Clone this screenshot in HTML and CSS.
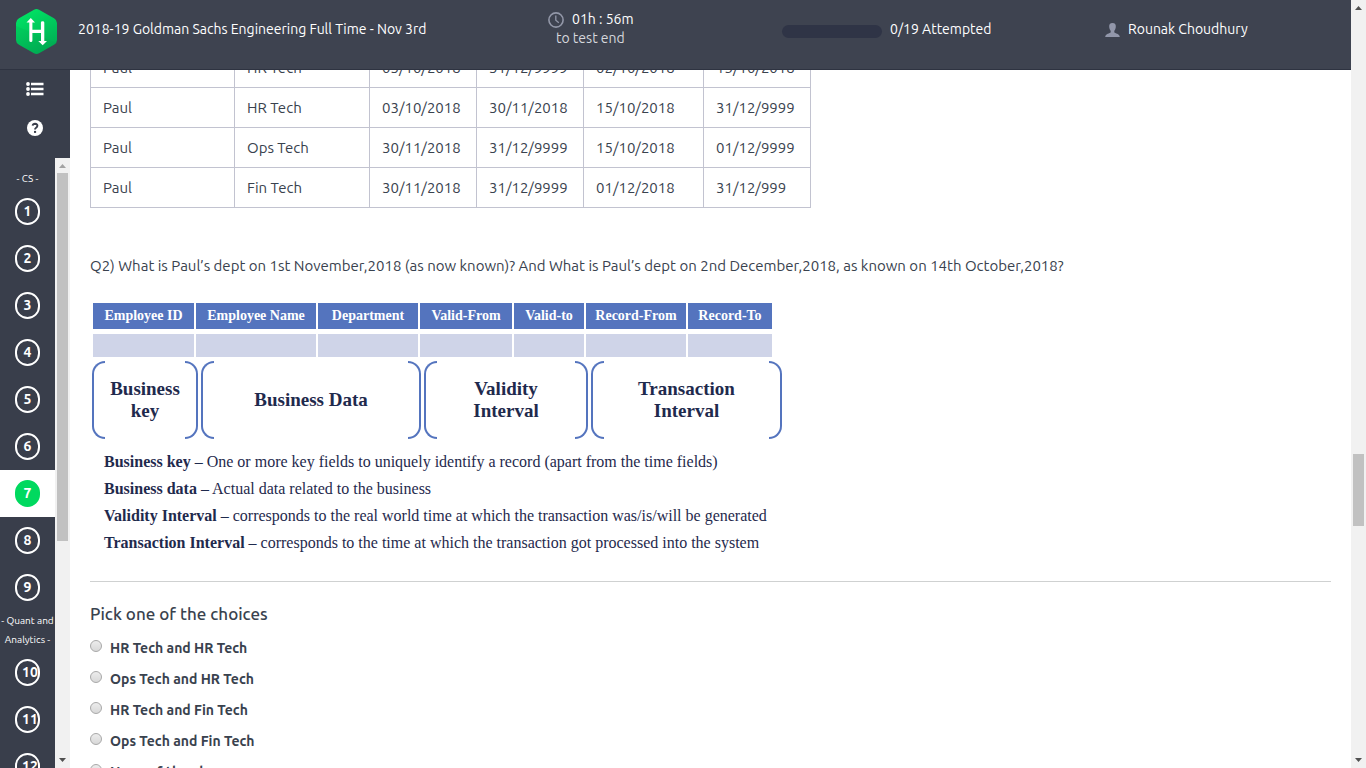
FILE: index.html
```html
<!DOCTYPE html>
<html lang="en">
<head>
<meta charset="utf-8">
<meta name="viewport" content="width=device-width, initial-scale=1">
<title>2018-19 Goldman Sachs Engineering Full Time - Nov 3rd</title>
<link rel="stylesheet" href="styles.css">
</head>
<body>
<div class="app">
  <header class="topbar">
    <a class="logo" href="#" aria-label="Home">
      <svg width="41" height="45" viewBox="0 0 41 45">
        <defs><linearGradient id="lg" x1="0" y1="0" x2="0.5" y2="1"><stop offset="0" stop-color="#00ea66"/><stop offset="1" stop-color="#00b055"/></linearGradient></defs>
        <path d="M18 .8Q20.500-.6 23 .8L38 9.300Q41 11 41 14V31Q41 34 38 35.700L23 44.200Q20.500 45.600 18 44.200L3 35.700Q0 34 0 31V14Q0 11 3 9.300Z" fill="url(#lg)"/>
        <path d="M0 17L41 34Q41 34.500 38 35.700L23 44.200Q20.500 45.600 18 44.200L3 35.700Q0 34 0 31Z" fill="#009a4a" opacity=".15"/>
        <path d="M13.300 12H16.400V20.800H24.900V13.500Q24.900 12.300 26.600 12.300T28.300 13.500V32H31L26.700 36.200L22.300 32H25V24H16.400V31.500Q16.400 33 14.900 33T13.300 31.500V13.500H10.500L14.800 9L19 13.500H16.400Z" fill="#fff"/>
      </svg>
    </a>
    <div class="title">2018-19 Goldman Sachs Engineering Full Time - Nov 3rd</div>
    <div class="timer">
      <div class="timer-row">
        <svg width="16" height="16" viewBox="0 0 16 16" fill="none" stroke="#9297a8"><circle cx="8" cy="8" r="7.100" stroke-width="1.600"/><path d="M7.800 3.500V8.300L10.800 10.800" stroke-width="1.300"/></svg>
        <span>01h : 56m</span>
      </div>
      <div class="timer-sub">to test end</div>
    </div>
    <div class="attempts"><span class="bar"></span><span>0/19 Attempted</span></div>
    <div class="user">
      <svg width="15" height="14" viewBox="0 0 15 14"><path d="M7.500 0C10 0 11 1.500 10.800 4C10.700 6 9.700 7 9.300 8V9.300C10 10.500 14.500 10.700 14.800 14H.2C.5 10.700 5 10.500 5.700 9.300V8C5.300 7 4.300 6 4.200 4C4 1.500 5 0 7.500 0Z" fill="#9297aa"/></svg>
      <span>Rounak Choudhury</span>
    </div>
  </header>
  <div class="body">
    <aside class="side">
      <div class="tools">
        <button class="tool" aria-label="Question list"><svg width="18" height="14" viewBox="0 0 18 14" fill="#fff"><circle cx="2" cy="2" r="1.900"/><circle cx="2" cy="7" r="1.900"/><circle cx="2" cy="12" r="1.900"/><path d="M5 .8H17.500V3.200H5ZM5 5.800H17.500V8.200H5ZM5 10.800H17.500V13.200H5Z"/></svg></button>
        <button class="tool" aria-label="Help"><svg width="16" height="16" viewBox="0 0 16 16"><circle cx="8" cy="8" r="8" fill="#fff"/><path d="M5.600 5.600Q6 3.700 8 3.700Q10.400 3.900 10.400 5.800Q10.400 6.900 9.100 7.700Q8 8.400 8 9.600" fill="none" stroke="#393e4b" stroke-width="1.900"/><path d="M7 10.900H9.100V12.900H7Z" fill="#393e4b"/></svg></button>
      </div>
      <div class="nav-wrap">
        <nav class="nav">
          <div class="section">- CS -</div>
          <a class="q" href="#"><span class="num">1</span></a>
          <a class="q" href="#"><span class="num">2</span></a>
          <a class="q" href="#"><span class="num">3</span></a>
          <a class="q" href="#"><span class="num">4</span></a>
          <a class="q" href="#"><span class="num">5</span></a>
          <a class="q" href="#"><span class="num">6</span></a>
          <a class="q active" href="#"><span class="num">7</span></a>
          <a class="q" href="#"><span class="num">8</span></a>
          <a class="q" href="#"><span class="num">9</span></a>
          <div class="section">- Quant and<br>Analytics -</div>
          <a class="q" href="#"><span class="num wide">10</span></a>
          <a class="q" href="#"><span class="num wide">11</span></a>
          <a class="q" href="#"><span class="num wide">12</span></a>
        </nav>
        <div class="scroll nav-scroll">
          <svg class="arrow" viewBox="0 0 15 15"><path d="M4 10L7.500 6L11 10Z" fill="#a3a3a3"/></svg>
          <div class="track"><div class="thumb"></div></div>
          <svg class="arrow" viewBox="0 0 15 15"><path d="M4 5L7.500 9L11 5Z" fill="#505050"/></svg>
        </div>
      </div>
    </aside>
    <main class="main">
      <table class="records">
        <colgroup><col class="c-name"><col class="c-dept"><col class="c-date"><col class="c-date"><col class="c-rec"><col class="c-date"></colgroup>
        <tbody>
          <tr><td>Paul</td><td>HR Tech</td><td>03/10/2018</td><td>31/12/9999</td><td>02/10/2018</td><td>15/10/2018</td></tr>
          <tr><td>Paul</td><td>HR Tech</td><td>03/10/2018</td><td>30/11/2018</td><td>15/10/2018</td><td>31/12/9999</td></tr>
          <tr><td>Paul</td><td>Ops Tech</td><td>30/11/2018</td><td>31/12/9999</td><td>15/10/2018</td><td>01/12/9999</td></tr>
          <tr><td>Paul</td><td>Fin Tech</td><td>30/11/2018</td><td>31/12/9999</td><td>01/12/2018</td><td>31/12/999</td></tr>
        </tbody>
      </table>
      <p class="question">Q2) What is Paul’s dept on 1st November,2018 (as now known)? And What is Paul’s dept on 2nd December,2018, as known on 14th October,2018?</p>
      <figure class="schema">
        <table class="fields">
          <colgroup><col class="f-md"><col class="f-lg"><col class="f-md"><col class="f-from"><col class="f-to"><col class="f-md"><col class="f-rec"></colgroup>
          <thead><tr><th>Employee ID</th><th>Employee Name</th><th>Department</th><th>Valid-From</th><th>Valid-to</th><th>Record-From</th><th>Record-To</th></tr></thead>
          <tbody><tr><td></td><td></td><td></td><td></td><td></td><td></td><td></td></tr></tbody>
        </table>
        <div class="groups">
          <div class="group"><span>Business<br>key</span></div>
          <div class="group"><span>Business Data</span></div>
          <div class="group"><span>Validity<br>Interval</span></div>
          <div class="group"><span>Transaction<br>Interval</span></div>
        </div>
        <div class="defs">
          <p><b>Business key</b> – One or more key fields to uniquely identify a record (apart from the time fields)</p>
          <p><b>Business data</b> – Actual data related to the business</p>
          <p><b>Validity Interval</b> – corresponds to the real world time at which the transaction was/is/will be generated</p>
          <p><b>Transaction Interval</b> – corresponds to the time at which the transaction got processed into the system</p>
        </div>
      </figure>
      <hr class="rule">
      <h2 class="pick">Pick one of the choices</h2>
      <div class="choices">
        <label class="choice"><input type="radio" name="answer"><span>HR Tech and HR Tech</span></label>
        <label class="choice"><input type="radio" name="answer"><span>Ops Tech and HR Tech</span></label>
        <label class="choice"><input type="radio" name="answer"><span>HR Tech and Fin Tech</span></label>
        <label class="choice"><input type="radio" name="answer"><span>Ops Tech and Fin Tech</span></label>
        <label class="choice"><input type="radio" name="answer"><span>None of the above</span></label>
      </div>
    </main>
  </div>
  <div class="scroll page-scroll">
    <svg class="arrow" viewBox="0 0 15 15"><path d="M4 10L7.500 6L11 10Z" fill="#505050"/></svg>
    <div class="track"><div class="thumb"></div></div>
    <svg class="arrow" viewBox="0 0 15 15"><path d="M4 5L7.500 9L11 5Z" fill="#505050"/></svg>
  </div>
</div>
</body>
</html>
```
FILE: styles.css
```css
*, *::before, *::after { box-sizing: border-box; }
body { margin: 0; font-family: Ubuntu, "Noto Sans", sans-serif; font-size: 15px; color: #39424e; background: #fff; }
p, h2, figure { margin: 0; }
a { color: inherit; text-decoration: none; }
svg { display: block; flex: none; }

.app { display: grid; grid-template: 70px minmax(0, 1fr) / minmax(0, 1fr) 15px; height: 100vh; overflow: hidden; }

.topbar { display: grid; grid-template-columns: 78px 470fr 234fr 323fr 246fr; align-items: start; background: #3e4350; border-bottom: 1px solid #2e3341; color: #fff; font-size: 14px; line-height: 19px; white-space: nowrap; z-index: 1; }
.logo { padding: 9px 0 0 16px; }
.title, .attempts, .user { padding-top: 20px; }
.timer { padding-top: 10px; justify-self: start; }
.timer-row { display: flex; align-items: center; gap: 8px; }
.timer-sub { color: #d5d7dc; padding-left: 8px; }
.attempts, .user { display: flex; align-items: center; gap: 8px; }
.bar { width: 100px; height: 13px; border-radius: 7px; background: #2f3446; margin-top: 3px; }

.body { display: flex; min-height: 0; }
.side { width: 70px; flex: none; display: flex; flex-direction: column; background: #393e4b; color: #fff; }
.tools { display: flex; flex-direction: column; align-items: center; gap: 24px; padding-top: 12px; height: 88px; flex: none; }
.tool { padding: 0; border: 0; background: none; cursor: pointer; }
.nav-wrap { display: flex; flex: 1; min-height: 0; }
.nav { flex: 1; padding-top: 11px; overflow: hidden; }
.section { font-size: 10px; line-height: 19px; text-align: center; white-space: nowrap; }
.q { display: flex; justify-content: center; align-items: center; height: 47px; }
.num { width: 25px; height: 27px; border: 2px solid #fff; border-radius: 13px; text-align: center; font-size: 14px; line-height: 22px; font-weight: 700; }
.wide { text-align: left; padding-left: 5px; }
.q.active { background: #fff; color: #fff; }
.active .num { background: #00d95f; border-color: #00d95f; }

.scroll { display: flex; flex-direction: column; width: 15px; background: #f1f1f1; }
.arrow { width: 15px; height: 15px; }
.track { flex: 1; display: flex; flex-direction: column; padding: 0 2px; }
.thumb { background: #c1c1c1; }
.nav-scroll .thumb { height: 63.500%; }
.page-scroll { grid-column: 2; grid-row: 1 / 3; }
.page-scroll .thumb { height: 72px; margin-top: 439px; }

.main { flex: 1; min-width: 0; overflow: hidden; padding: 0 20px; }
.records { border-collapse: collapse; table-layout: fixed; width: 721px; margin-top: -23px; line-height: 20px; }
.records td { height: 40px; padding: 0 12px; border: 1px solid #c2c3d0; white-space: nowrap; }
.c-name { width: 144px; }
.c-dept { width: 135px; }
.c-date { width: 107px; }
.c-rec { width: 120px; }
.question { margin-top: 46px; line-height: 24px; }

.schema { margin-top: 25px; padding-left: 2px; font-family: "Palatino Linotype", Palatino, "Liberation Serif", serif; color: #1f2a4d; }
.fields { border-collapse: separate; border-spacing: 0; table-layout: fixed; width: 680px; margin-left: 1px; }
.fields th { height: 26px; padding: 0; background: #5474be; color: #fff; font-size: 14px; line-height: 20px; white-space: nowrap; }
.fields td { height: 28px; padding: 0; background: #cfd4e8; border-top: 5px solid #fff; }
.fields th, .fields td { border-right: 1px solid #fff; }
.fields th + th, .fields td + td { border-left: 1px solid #fff; }
.f-md { width: 102px; }
.f-lg { width: 122px; }
.f-from { width: 94px; }
.f-to { width: 72px; }
.f-rec { width: 86px; }
.groups { display: grid; grid-template-columns: 106px 220px 164px 191px; gap: 3px; margin-top: 4px; }
.group { display: flex; align-items: center; justify-content: space-between; height: 78px; font-size: 19px; line-height: 22px; font-weight: 700; text-align: center; white-space: nowrap; }
.group::before, .group::after { content: ""; width: 13px; height: 78px; border: 2px solid #5474be; }
.group::before { border-right: 0; border-radius: 13px 0 0 13px; }
.group::after { border-left: 0; border-radius: 0 13px 13px 0; }
.defs { margin-top: 9px; padding-left: 12px; font-size: 16px; line-height: 27px; white-space: nowrap; }

.rule { margin: 25px 0 0; border: 0; border-top: 1px solid #cfd1d1; }
.pick { margin-top: 20px; font-size: 17px; line-height: 24px; font-weight: 500; }
.choices { margin-top: 6px; }
.choice { display: flex; align-items: center; gap: 8px; height: 31px; font-size: 14px; font-weight: 700; }
.choice input { appearance: none; width: 12px; height: 12px; margin: 0 0 4px; border: 1px solid #a8a8a8; border-radius: 50%; background: linear-gradient(#ececec, #d8d8d8); }
```
